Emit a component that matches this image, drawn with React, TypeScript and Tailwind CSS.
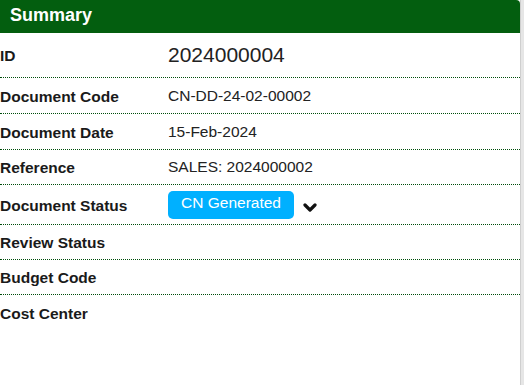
import React from "react";

type Row = { label: string; value?: React.ReactNode; h: string; last?: boolean };

const StatusBadge: React.FC = () => (
  <div className="flex items-center">
    <span className="inline-flex h-[28px] w-[126px] justify-center rounded-[5px] bg-[#00b0ff] pt-[2px] text-[15.5px] leading-[20px] text-white">
      CN Generated
    </span>
    <svg width="14" height="10" viewBox="0 0 14 10" className="ml-[9px] mt-[6px]">
      <polyline points="2,2 7,7 12,2" fill="none" stroke="#111" strokeWidth="3.2" strokeLinecap="round" strokeLinejoin="round" />
    </svg>
  </div>
);

// heights include the 1px dotted bottom border
const rows: Row[] = [
  { label: "ID", value: <span className="text-[21px] text-[#222]">2024000004</span>, h: "h-[45px]" },
  { label: "Document Code", value: "CN-DD-24-02-00002", h: "h-[36px]" },
  { label: "Document Date", value: "15-Feb-2024", h: "h-[36px]" },
  { label: "Reference", value: "SALES: 2024000002", h: "h-[35px]" },
  { label: "Document Status", value: <StatusBadge />, h: "h-[40px]" },
  { label: "Review Status", h: "h-[35px]" },
  { label: "Budget Code", h: "h-[35px]" },
  { label: "Cost Center", h: "h-[35px]", last: true },
];

const App: React.FC = () => {
  return (
    <div className="h-[385px] w-[524px] bg-white font-['Liberation_Sans',Arial,sans-serif]">
      <div className="flex h-full w-[524px]">
        <div className="w-[520px]">
          <div className="flex h-[33px] items-center rounded-tr-[4px] bg-[#035e0f] pl-[10px] pb-[2px]">
            <span className="text-[18px] font-bold text-white">Summary</span>
          </div>
          {rows.map((r) => (
            <div
              key={r.label}
              className={`flex items-center ${r.h} ${r.last ? "" : "border-b border-dotted border-[#004d0a]"}`}
            >
              <div className="w-[168px] pt-[2px] text-[15.5px] font-bold text-[#1a1a1a]">{r.label}</div>
              <div className="flex-1 text-[15.5px] text-[#222]">{r.value}</div>
            </div>
          ))}
        </div>
        <div className="w-[4px] border-l border-[#cfcfcf] bg-[#e6e6e6]" />
      </div>
    </div>
  );
};

export default App;
